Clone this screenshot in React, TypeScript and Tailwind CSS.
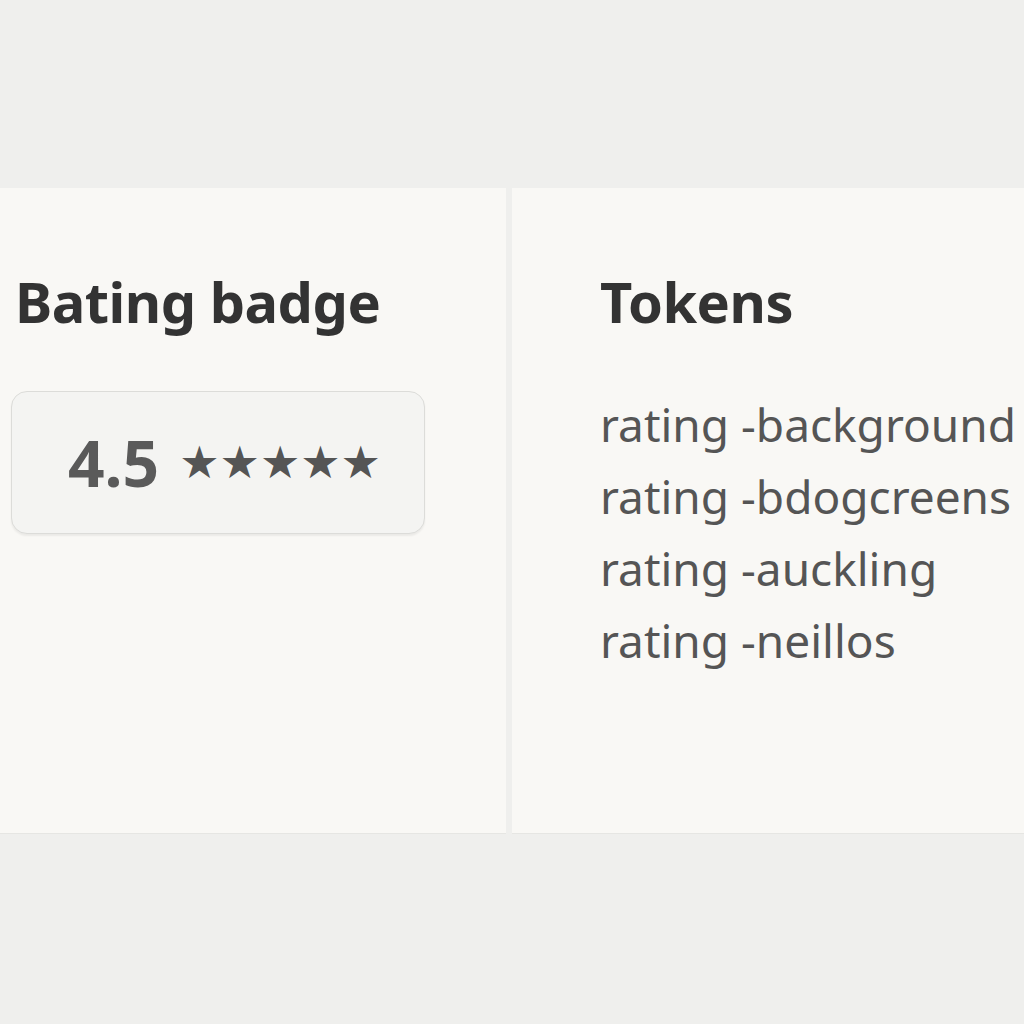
export default function App() {
  const tokens = [
    "rating -background",
    "rating -bdogcreens",
    "rating -auckling",
    "rating -neillos",
  ];
  return (
    <div
      className="w-[1024px] h-[1024px] bg-[#efefed] flex flex-col overflow-hidden"
      style={{ fontFamily: '"Noto Sans", "DejaVu Sans", sans-serif' }}
    >
      <div className="h-[188px] shrink-0" />
      <div className="h-[646px] shrink-0 flex gap-[6px]">
        <div className="w-[506px] bg-[#f9f8f5] border-b border-[#e6e6e3] pt-[85px] pl-[11px]">
          <h1 className="pl-[4px] text-[56px] leading-none font-bold text-[#333333] tracking-[-0.5px]">
            Bating badge
          </h1>
          <div className="mt-[62px] w-[414px] h-[143px] rounded-[16px] border border-[#dcdcd9] bg-[#f4f4f2] shadow-[0_2px_2px_rgba(0,0,0,0.06)] flex items-center pl-[56px]">
            <span className="text-[64px] leading-none font-bold text-[#5a5a5a]">4.5</span>
            <span
              className="ml-[20px] text-[45px] leading-none text-[#555555]"
              style={{ fontFamily: '"DejaVu Sans", sans-serif' }}
            >
              ★★★★★
            </span>
          </div>
        </div>
        <div className="flex-1 bg-[#f9f8f5] border-b border-[#e6e6e3] pt-[85px] pl-[88px]">
          <h2 className="text-[56px] leading-none font-bold text-[#333333] tracking-[-0.5px]">
            Tokens
          </h2>
          <ul className="mt-[59px] text-[46px] leading-[72px] text-[#555555]">
            {tokens.map((t) => (
              <li key={t} className="whitespace-nowrap">{t}</li>
            ))}
          </ul>
        </div>
      </div>
      <div className="flex-1" />
    </div>
  );
}
